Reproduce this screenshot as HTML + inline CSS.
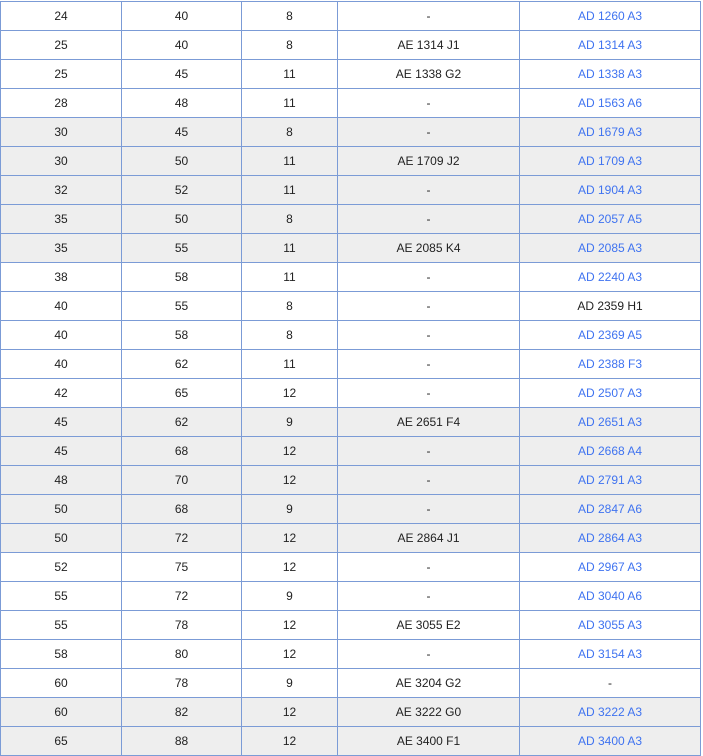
<!DOCTYPE html><html><head><style>
body{margin:0;background:#fff;}
table{position:absolute;left:0;top:1px;border-collapse:collapse;font:12px "Liberation Sans",Arial,sans-serif;color:#222;}
td{border:1px solid #7b9bd6;height:29px;padding:0;text-align:center;box-sizing:border-box;}
tr.g td{background:#eeeeee;}
td.l{color:#3f73f0;}
</style></head><body>
<table>
<colgroup><col style="width:121px"><col style="width:120px"><col style="width:96px"><col style="width:182px"><col style="width:181px"></colgroup>
<tr><td>24</td><td>40</td><td>8</td><td>-</td><td class="l">AD 1260 A3</td></tr>
<tr><td>25</td><td>40</td><td>8</td><td>AE 1314 J1</td><td class="l">AD 1314 A3</td></tr>
<tr><td>25</td><td>45</td><td>11</td><td>AE 1338 G2</td><td class="l">AD 1338 A3</td></tr>
<tr><td>28</td><td>48</td><td>11</td><td>-</td><td class="l">AD 1563 A6</td></tr>
<tr class="g"><td>30</td><td>45</td><td>8</td><td>-</td><td class="l">AD 1679 A3</td></tr>
<tr class="g"><td>30</td><td>50</td><td>11</td><td>AE 1709 J2</td><td class="l">AD 1709 A3</td></tr>
<tr class="g"><td>32</td><td>52</td><td>11</td><td>-</td><td class="l">AD 1904 A3</td></tr>
<tr class="g"><td>35</td><td>50</td><td>8</td><td>-</td><td class="l">AD 2057 A5</td></tr>
<tr class="g"><td>35</td><td>55</td><td>11</td><td>AE 2085 K4</td><td class="l">AD 2085 A3</td></tr>
<tr><td>38</td><td>58</td><td>11</td><td>-</td><td class="l">AD 2240 A3</td></tr>
<tr><td>40</td><td>55</td><td>8</td><td>-</td><td>AD 2359 H1</td></tr>
<tr><td>40</td><td>58</td><td>8</td><td>-</td><td class="l">AD 2369 A5</td></tr>
<tr><td>40</td><td>62</td><td>11</td><td>-</td><td class="l">AD 2388 F3</td></tr>
<tr><td>42</td><td>65</td><td>12</td><td>-</td><td class="l">AD 2507 A3</td></tr>
<tr class="g"><td>45</td><td>62</td><td>9</td><td>AE 2651 F4</td><td class="l">AD 2651 A3</td></tr>
<tr class="g"><td>45</td><td>68</td><td>12</td><td>-</td><td class="l">AD 2668 A4</td></tr>
<tr class="g"><td>48</td><td>70</td><td>12</td><td>-</td><td class="l">AD 2791 A3</td></tr>
<tr class="g"><td>50</td><td>68</td><td>9</td><td>-</td><td class="l">AD 2847 A6</td></tr>
<tr class="g"><td>50</td><td>72</td><td>12</td><td>AE 2864 J1</td><td class="l">AD 2864 A3</td></tr>
<tr><td>52</td><td>75</td><td>12</td><td>-</td><td class="l">AD 2967 A3</td></tr>
<tr><td>55</td><td>72</td><td>9</td><td>-</td><td class="l">AD 3040 A6</td></tr>
<tr><td>55</td><td>78</td><td>12</td><td>AE 3055 E2</td><td class="l">AD 3055 A3</td></tr>
<tr><td>58</td><td>80</td><td>12</td><td>-</td><td class="l">AD 3154 A3</td></tr>
<tr><td>60</td><td>78</td><td>9</td><td>AE 3204 G2</td><td>-</td></tr>
<tr class="g"><td>60</td><td>82</td><td>12</td><td>AE 3222 G0</td><td class="l">AD 3222 A3</td></tr>
<tr class="g"><td>65</td><td>88</td><td>12</td><td>AE 3400 F1</td><td class="l">AD 3400 A3</td></tr>
</table>
</body></html>
